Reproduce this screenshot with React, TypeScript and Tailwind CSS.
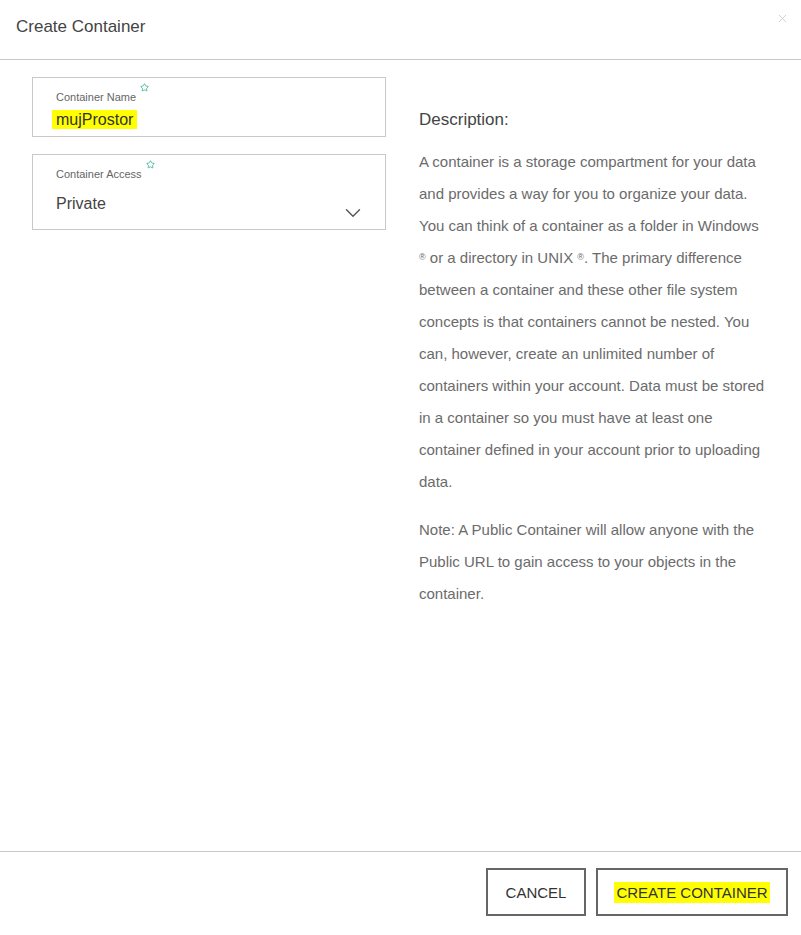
import { ChevronDown, X, Star } from 'lucide-react';

const font = { fontFamily: '"Liberation Sans", Arial, sans-serif' };

function Field({ label, children, tall }: { label: string; children: React.ReactNode; tall?: boolean }) {
  return (
    <div className={`relative border border-[#c8c8c8] px-[23px] pt-[12px] ${tall ? 'h-[76px]' : 'h-[60px]'}`}>
      <div className="flex items-start text-[11px] leading-[14px] text-[#666]">
        {label}
        <Star className="ml-[4px] -mt-[7px] w-[9px] h-[9px] text-[#2fa58c]" strokeWidth={2} />
      </div>
      {children}
    </div>
  );
}

export default function App() {
  return (
    <div className="w-[801px] h-[935px] bg-white flex flex-col" style={font}>
      {/* Header */}
      <header className="relative h-[60px] border-b border-[#c8c8c8] flex items-center px-[16px]">
        <h2 className="text-[17px] text-[#444] -mt-[6px]">Create Container</h2>
        <X className="absolute right-[12px] top-[12px] w-[13px] h-[13px] text-[#c8c8c8]" strokeWidth={1.5} />
      </header>

      {/* Body */}
      <main className="flex-1 flex px-[32px] pt-[17px]">
        <div className="w-[354px] flex-none flex flex-col gap-[17px]">
          <Field label="Container Name">
            <div className="mt-[7px] -ml-[4px] text-[16px] leading-[18px] text-[#333]">
              <span className="bg-[#ffff00] px-[4px] py-[1px]">mujProstor</span>
            </div>
          </Field>
          <Field label="Container Access" tall>
            <div className="mt-[13px] text-[16px] leading-[20px] text-[#444]">Private</div>
            <ChevronDown className="absolute right-[19px] top-[45px] w-[26px] h-[26px] text-[#555]" strokeWidth={1.3} />
          </Field>
        </div>

        <div className="ml-[33px] w-[347px] flex-none pt-[31px]">
          <h3 className="text-[17px] leading-[24px] text-[#444]">Description:</h3>
          <p className="mt-[14px] text-[15px] leading-[32px] text-[#6b6b6b]">
            A container is a storage compartment for your data and provides a way for you to organize your data. You can
            think of a container as a folder in Windows <span className="text-[9px] leading-none align-[3px]">®</span> or a
            directory in UNIX <span className="text-[9px] leading-none align-[3px]">®</span>. The primary difference
            between a container and these other file system concepts is that containers cannot be nested. You can,
            however, create an unlimited number of containers within your account. Data must be stored in a container so
            you must have at least one container defined in your account prior to uploading data.
          </p>
          <p className="mt-[16px] text-[15px] leading-[32px] text-[#6b6b6b]">
            Note: A Public Container will allow anyone with the Public URL to gain access to your objects in the
            container.
          </p>
        </div>
      </main>

      {/* Footer */}
      <footer className="h-[84px] border-t border-[#c8c8c8] pt-[16px]">
        <div className="flex justify-end gap-[10px] pr-[13px] border-b border-[#222] h-[82px] pb-[17px]">
          <button className="w-[100px] h-[48px] border-2 border-[#666] pt-[3px] text-[15px] text-[#333]">CANCEL</button>
          <button className="w-[192px] h-[48px] border-2 border-[#666] pt-[3px] text-[15px] text-[#333]">
            <span className="bg-[#ffff00] px-[2px] py-[2px]">CREATE CONTAINER</span>
          </button>
        </div>
      </footer>
    </div>
  );
}
